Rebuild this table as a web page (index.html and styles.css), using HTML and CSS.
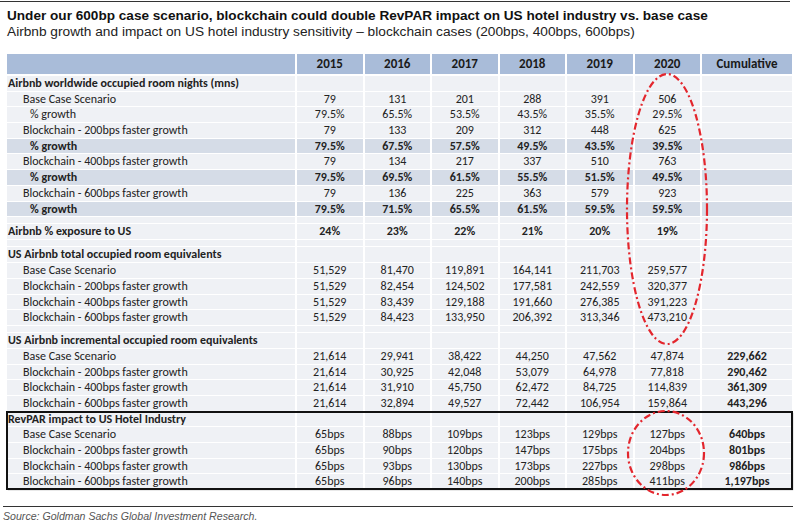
FILE: index.html
```html
<!DOCTYPE html>
<html>
<head>
<meta charset="utf-8">
<link rel="stylesheet" href="styles.css">
</head>
<body>
<div class="page">
  <div class="rule-top"></div>
  <h1 class="title">Under our 600bp case scenario, blockchain could double RevPAR impact on US hotel industry vs. base case</h1>
  <p class="subtitle">Airbnb growth and impact on US hotel industry sensitivity – blockchain cases (200bps, 400bps, 600bps)</p>

  <div class="table">
    <div class="row head"><span class="lbl"></span><span>2015</span><span>2016</span><span>2017</span><span>2018</span><span>2019</span><span>2020</span><span>Cumulative</span></div>

    <div class="row sec"><span class="lbl">Airbnb worldwide occupied room nights (mns)</span><span></span><span></span><span></span><span></span><span></span><span></span><span></span></div>
    <div class="row"><span class="lbl l1">Base Case Scenario</span><span>79</span><span>131</span><span>201</span><span>288</span><span>391</span><span>506</span><span></span></div>
    <div class="row"><span class="lbl l2">% growth</span><span>79.5%</span><span>65.5%</span><span>53.5%</span><span>43.5%</span><span>35.5%</span><span>29.5%</span><span></span></div>
    <div class="row"><span class="lbl l1">Blockchain - 200bps faster growth</span><span>79</span><span>133</span><span>209</span><span>312</span><span>448</span><span>625</span><span></span></div>
    <div class="row band"><span class="lbl l2">% growth</span><span>79.5%</span><span>67.5%</span><span>57.5%</span><span>49.5%</span><span>43.5%</span><span>39.5%</span><span></span></div>
    <div class="row"><span class="lbl l1">Blockchain - 400bps faster growth</span><span>79</span><span>134</span><span>217</span><span>337</span><span>510</span><span>763</span><span></span></div>
    <div class="row band"><span class="lbl l2">% growth</span><span>79.5%</span><span>69.5%</span><span>61.5%</span><span>55.5%</span><span>51.5%</span><span>49.5%</span><span></span></div>
    <div class="row"><span class="lbl l1">Blockchain - 600bps faster growth</span><span>79</span><span>136</span><span>225</span><span>363</span><span>579</span><span>923</span><span></span></div>
    <div class="row band"><span class="lbl l2">% growth</span><span>79.5%</span><span>71.5%</span><span>65.5%</span><span>61.5%</span><span>59.5%</span><span>59.5%</span><span></span></div>
    <div class="row spacer"><span></span><span></span><span></span><span></span><span></span><span></span><span></span><span></span></div>

    <div class="row sec boldvals"><span class="lbl">Airbnb % exposure to US</span><span>24%</span><span>23%</span><span>22%</span><span>21%</span><span>20%</span><span>19%</span><span></span></div>
    <div class="row spacer"><span></span><span></span><span></span><span></span><span></span><span></span><span></span><span></span></div>

    <div class="row sec"><span class="lbl">US Airbnb total occupied room equivalents</span><span></span><span></span><span></span><span></span><span></span><span></span><span></span></div>
    <div class="row"><span class="lbl l1">Base Case Scenario</span><span>51,529</span><span>81,470</span><span>119,891</span><span>164,141</span><span>211,703</span><span>259,577</span><span></span></div>
    <div class="row"><span class="lbl l1">Blockchain - 200bps faster growth</span><span>51,529</span><span>82,454</span><span>124,502</span><span>177,581</span><span>242,559</span><span>320,377</span><span></span></div>
    <div class="row"><span class="lbl l1">Blockchain - 400bps faster growth</span><span>51,529</span><span>83,439</span><span>129,188</span><span>191,660</span><span>276,385</span><span>391,223</span><span></span></div>
    <div class="row"><span class="lbl l1">Blockchain - 600bps faster growth</span><span>51,529</span><span>84,423</span><span>133,950</span><span>206,392</span><span>313,346</span><span>473,210</span><span></span></div>
    <div class="row spacer"><span></span><span></span><span></span><span></span><span></span><span></span><span></span><span></span></div>

    <div class="row sec"><span class="lbl">US Airbnb incremental occupied room equivalents</span><span></span><span></span><span></span><span></span><span></span><span></span><span></span></div>
    <div class="row"><span class="lbl l1">Base Case Scenario</span><span>21,614</span><span>29,941</span><span>38,422</span><span>44,250</span><span>47,562</span><span>47,874</span><span class="b">229,662</span></div>
    <div class="row"><span class="lbl l1">Blockchain - 200bps faster growth</span><span>21,614</span><span>30,925</span><span>42,048</span><span>53,079</span><span>64,978</span><span>77,818</span><span class="b">290,462</span></div>
    <div class="row"><span class="lbl l1">Blockchain - 400bps faster growth</span><span>21,614</span><span>31,910</span><span>45,750</span><span>62,472</span><span>84,725</span><span>114,839</span><span class="b">361,309</span></div>
    <div class="row"><span class="lbl l1">Blockchain - 600bps faster growth</span><span>21,614</span><span>32,894</span><span>49,527</span><span>72,442</span><span>106,954</span><span>159,864</span><span class="b">443,296</span></div>

    <div class="boxed">
      <div class="row sec"><span class="lbl">RevPAR impact to US Hotel Industry</span><span></span><span></span><span></span><span></span><span></span><span></span><span></span></div>
      <div class="row"><span class="lbl l1">Base Case Scenario</span><span>65bps</span><span>88bps</span><span>109bps</span><span>123bps</span><span>129bps</span><span>127bps</span><span class="b">640bps</span></div>
      <div class="row"><span class="lbl l1">Blockchain - 200bps faster growth</span><span>65bps</span><span>90bps</span><span>120bps</span><span>147bps</span><span>175bps</span><span>204bps</span><span class="b">801bps</span></div>
      <div class="row"><span class="lbl l1">Blockchain - 400bps faster growth</span><span>65bps</span><span>93bps</span><span>130bps</span><span>173bps</span><span>227bps</span><span>298bps</span><span class="b">986bps</span></div>
      <div class="row"><span class="lbl l1">Blockchain - 600bps faster growth</span><span>65bps</span><span>96bps</span><span>140bps</span><span>200bps</span><span>285bps</span><span>411bps</span><span class="b">1,197bps</span></div>
    </div>
  </div>

  <div class="source">Source: Goldman Sachs Global Investment Research.</div>

  <svg class="marks" width="800" height="524" viewBox="0 0 800 524">
    <ellipse cx="667" cy="209" rx="40" ry="135" />
    <ellipse cx="666" cy="453" rx="38" ry="42" />
  </svg>
</div>
</body>
</html>
```

FILE: styles.css
```css
html, body {
  margin: 0;
  padding: 0;
  background: #ffffff;
}

.page {
  position: relative;
  width: 800px;
  height: 524px;
  overflow: hidden;
}

.rule-top {
  margin: 1px 10px 0 0;
  height: 1px;
  background: #333;
}

.title {
  margin: 6px 0 0 7px;
  font-family: "Liberation Sans", Arial, sans-serif;
  font-weight: bold;
  font-size: 13.6px;
  line-height: 16px;
  color: #111;
}

.subtitle {
  margin: 0 0 0 7px;
  font-family: "Liberation Sans", Arial, sans-serif;
  font-size: 13.7px;
  line-height: 16px;
  color: #222;
}

.table {
  margin: 14px 0 0 7px;
  width: 785px;
  font-family: "Carlito", "Lato", sans-serif;
  font-size: 12px;
  color: #222;
}

.row {
  display: grid;
  grid-template-columns: 288px repeat(6, 65.5px) 90px;
  column-gap: 2px;
  margin-bottom: 1px;
  height: 14.7px;
}

.row > span {
  background: #eff1f5;
  text-align: center;
  line-height: 14.7px;
  white-space: nowrap;
}

.row > span.lbl {
  text-align: left;
  padding-left: 1px;
}

.row > span.l1 { padding-left: 16px; }
.row > span.l2 { padding-left: 23px; }

.row.head {
  height: 20px;
  margin-bottom: 2px;
}

.row.head > span {
  background: #a9bcd9;
  font-weight: bold;
  font-size: 13px;
  line-height: 20px;
  color: #1a1a1a;
}

.row.band > span {
  background: #d5dce7;
  font-weight: bold;
}

.row.sec > span.lbl {
  font-weight: bold;
}

.row.boldvals > span {
  font-weight: bold;
}

.row > span.b {
  font-weight: bold;
}

.row.spacer {
  height: 6.3px;
}

.boxed {
  outline: 2px solid #111;
  outline-offset: -1px;
  box-shadow: 1px 1px 1px #777;
}

.source {
  margin: 17px 7px 0 3px;
  padding-top: 3px;
  border-top: 1px solid #333;
  font-family: "Liberation Sans", Arial, sans-serif;
  font-style: italic;
  font-size: 10.6px;
  line-height: 13px;
  color: #555;
}

.marks {
  position: absolute;
  left: 0;
  top: 0;
  pointer-events: none;
}

.marks ellipse {
  fill: none;
  stroke: #e3262d;
  stroke-width: 2.2;
  stroke-dasharray: 7 3 2 3;
}
```
